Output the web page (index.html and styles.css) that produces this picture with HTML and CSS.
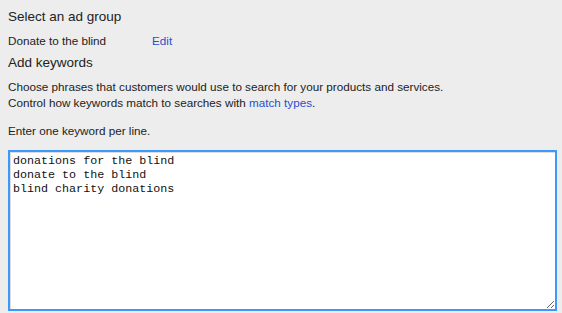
FILE: index.html
```html
<!DOCTYPE html>
<html>
<head>
    <title>Add keywords</title>
    <link rel="stylesheet" href="styles.css">
</head>
<body>
    <div class="page">
        <h2 class="section-title">Select an ad group</h2>
        <div class="ad-group">
            <span class="ad-group-name">Donate to the blind</span>
            <a href="#" class="link">Edit</a>
        </div>

        <h2 class="section-title">Add keywords</h2>
        <p class="help">
            Choose phrases that customers would use to search for your products and services.<br>
            Control how keywords match to searches with <a href="#" class="link">match types</a>.
        </p>

        <p class="hint">Enter one keyword per line.</p>
        <textarea class="keywords" spellcheck="false">donations for the blind
donate to the blind
blind charity donations</textarea>
    </div>
</body>
</html>
```

FILE: styles.css
```css
body {
    margin: 0;
    padding: 0;
    background-color: #ededed;
    font-family: "Liberation Sans", Arial, sans-serif;
    color: #222;
}

.page {
    padding: 7px 5px 0 8px;
}

.section-title {
    font-size: 13.5px;
    font-weight: normal;
    line-height: 20px;
    margin: 0;
}

.ad-group {
    display: flex;
    font-size: 11.7px;
    line-height: 16px;
    margin: 6px 0 4px;
}

.ad-group-name {
    width: 144px;
}

.link {
    color: #2a4fd0;
    text-decoration: none;
}

.help {
    font-size: 11.7px;
    line-height: 16px;
    margin: 6px 0 0;
}

.hint {
    font-size: 11.7px;
    line-height: 16px;
    margin: 12px 0 0;
}

.keywords {
    display: block;
    box-sizing: border-box;
    width: 549px;
    height: 161px;
    margin-top: 11px;
    padding: 2px 3px;
    border: 2px solid #3b99fc;
    border-radius: 0;
    outline: none;
    box-shadow: inset 1px 1px 0 #dcdcdc;
    background: #fff;
    font-family: "Liberation Mono", "Courier New", monospace;
    font-size: 11.7px;
    line-height: 14px;
    color: #111;
    resize: both;
}
```
